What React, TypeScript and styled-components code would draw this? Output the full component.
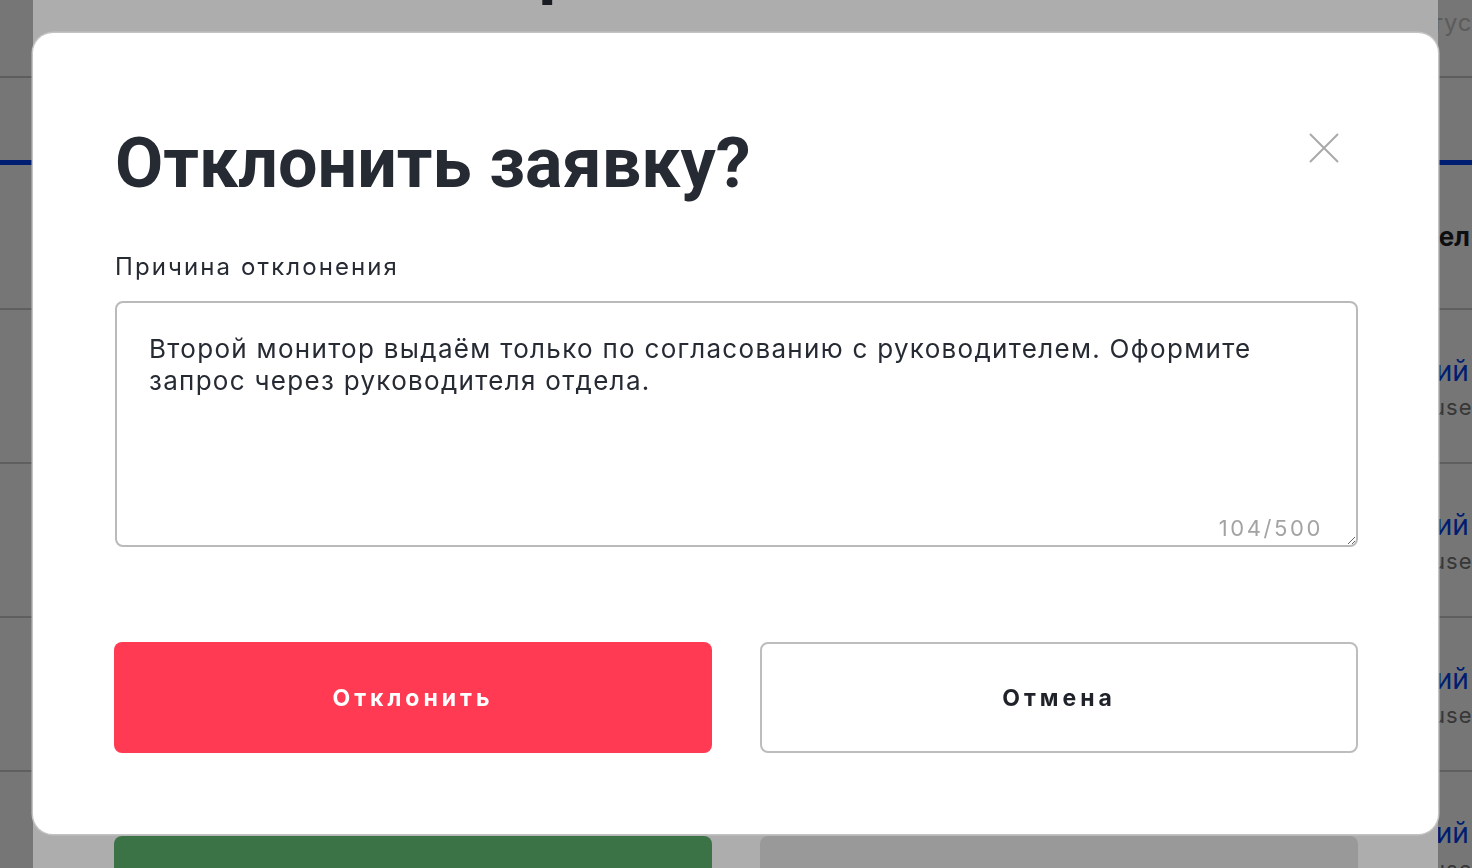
import styled, { createGlobalStyle } from 'styled-components';

const GlobalStyle = createGlobalStyle`
	html, body {
		margin: 0;
		height: 100%;
		overflow: hidden;
	}
	body {
		font-family: Inter, 'Noto Sans', sans-serif;
		color: #262a33;
	}
	* { box-sizing: border-box; }
`;

// ---- page behind both dialogs ----

const Page = styled.div`
	min-height: 100vh;
	background: #fff;
	display: flex;
	flex-direction: column;
`;

const TopBar = styled.header`
	height: 78px;
	border-bottom: 2px solid #c9c9c9;
	display: flex;
	justify-content: flex-end;
	padding-top: 8px;
`;

const Search = styled.div`
	width: 120px;
	font-size: 24px;
	letter-spacing: 0.04em;
	color: #c6c6c6;
	white-space: nowrap;
`;

const TabsBar = styled.nav`
	height: 87px;
	border-bottom: 5px solid #0041f5;
`;

const Row = styled.div<{ $head?: boolean }>`
	height: ${p => (p.$head ? 145 : 154)}px;
	border-bottom: 2px solid #cdcdcd;
	display: flex;
	align-items: ${p => (p.$head ? 'center' : 'flex-start')};
`;

const Cell = styled.div<{ $head?: boolean }>`
	margin-left: ${p => (p.$head ? 1388 : 1344)}px;
	padding-top: ${p => (p.$head ? 0 : 44)}px;
	white-space: nowrap;
	font-size: ${p => (p.$head ? 26 : 28)}px;
	font-weight: ${p => (p.$head ? 700 : 400)};
	color: ${p => (p.$head ? '#1c1f26' : '#0041f5')};
`;

const Sub = styled.div`
	font-size: 22px;
	letter-spacing: 0.05em;
	color: #777;
	margin-top: 6px;
	margin-left: 88px;
`;

// ---- dialogs ----

const Overlay = styled.div`
	position: fixed;
	inset: 0;
	background: rgba(0, 0, 0, 0.32);
`;

const BackSheet = styled.section`
	position: fixed;
	left: 33px;
	width: 1405px;
	top: -120px;
	bottom: -150px;
	background: #fff;
	border-radius: 20px;
	display: flex;
	flex-direction: column;
	padding: 47px 80px 71px;
`;

const Dialog = styled.section`
	position: fixed;
	left: 33px;
	top: 33px;
	width: 1405px;
	height: 801px;
	background: #fff;
	border-radius: 20px;
	box-shadow: 0 0 0 1.5px #c3c3c3;
	display: flex;
	flex-direction: column;
	padding: 90px 80px 81px 82px;
`;

const Header = styled.div`
	display: flex;
	justify-content: space-between;
	align-items: flex-start;
`;

const Title = styled.h2`
	margin: 0;
	font-family: Roboto, 'Liberation Sans', sans-serif;
	font-weight: 700;
	font-size: 70px;
	line-height: 80px;
	color: #262a33;
	white-space: nowrap;
`;

const CloseButton = styled.button`
	width: 66px;
	height: 50px;
	margin-right: 1px;
	border: 0;
	background: none;
	padding: 0;
	display: flex;
	justify-content: center;
	align-items: center;
	cursor: pointer;
`;

const Label = styled.label`
	display: block;
	margin-top: 48px;
	font-size: 24px;
	line-height: 32px;
	letter-spacing: 2.1px;
	color: #262a33;
`;

const Field = styled.div`
	position: relative;
	margin-top: 18px;
`;

const TextArea = styled.textarea`
	display: block;
	width: 100%;
	height: 246px;
	border: 2px solid #bababa;
	border-radius: 8px;
	padding: 30px 30px 0 32px;
	font-family: Inter, 'Noto Sans', sans-serif;
	font-size: 26px;
	line-height: 32px;
	letter-spacing: 1.3px;
	color: #262a33;
	resize: both;
	outline: none;
`;

const Counter = styled.span`
	position: absolute;
	right: 35px;
	bottom: 5px;
	font-size: 22px;
	line-height: 28px;
	letter-spacing: 2.6px;
	color: #a3a3a3;
`;

const Actions = styled.div<{ $pushDown?: boolean }>`
	display: grid;
	grid-template-columns: 1fr 1fr;
	gap: 48px;
	margin-top: ${p => (p.$pushDown ? 'auto' : '95px')};
	margin-left: ${p => (p.$pushDown ? '1px' : '-1px')};
`;

const Button = styled.button<{ $variant: 'danger' | 'outline' | 'success' | 'muted' }>`
	height: 111px;
	border-radius: 8px;
	font-family: Inter, 'Noto Sans', sans-serif;
	font-size: 23px;
	font-weight: 700;
	letter-spacing: 4px;
	cursor: pointer;
	border: 2px solid
		${p => (p.$variant === 'outline' ? '#bdbdbd' : 'transparent')};
	background: ${p =>
		p.$variant === 'danger'
			? '#ff3a52'
			: p.$variant === 'success'
				? '#57aa69'
				: p.$variant === 'muted'
					? '#e2e2e2'
					: '#fff'};
	color: ${p => (p.$variant === 'danger' || p.$variant === 'success' ? '#fff' : '#1f2229')};
`;

const CloseIcon = () => (
	<svg width='30' height='30' viewBox='0 0 30 30'>
		<path d='M1 1 L29 29 M29 1 L1 29' stroke='#a9a9a9' strokeWidth='2' fill='none' />
	</svg>
);

const rows = [
	{ name: 'Дмитрий Соколов', mail: 'user.sokolov@corp.ru' },
	{ name: 'Дмитрий Петров', mail: 'user.petrov@corp.ru' },
	{ name: 'Дмитрий Орлов', mail: 'user.orlov@corp.ru' },
	{ name: 'Дмитрий Ковалёв', mail: 'user.kovalev@corp.ru' },
];

const text =
	'Второй монитор выдаём только по согласованию с руководителем. Оформите запрос через руководителя отдела.';

export default function App() {
	return (
		<>
			<GlobalStyle />
			<Page>
				<TopBar>
					<Search>по статусу</Search>
				</TopBar>
				<TabsBar />
				<Row $head>
					<Cell $head>Отдел</Cell>
				</Row>
				{rows.map(r => (
					<Row key={r.name}>
						<Cell>
							{r.name}
							<Sub>{r.mail}</Sub>
						</Cell>
					</Row>
				))}
			</Page>

			<Overlay />
			<BackSheet>
				<Title>Заявка на перенос</Title>
				<Actions $pushDown>
					<Button $variant='success'>Одобрить</Button>
					<Button $variant='muted'>Отклонить</Button>
				</Actions>
			</BackSheet>

			<Overlay />
			<Dialog role='dialog'>
				<Header>
					<Title>Отклонить заявку?</Title>
					<CloseButton aria-label='Закрыть'>
						<CloseIcon />
					</CloseButton>
				</Header>
				<Label htmlFor='reason'>Причина отклонения</Label>
				<Field>
					<TextArea id='reason' defaultValue={text} maxLength={500} />
					<Counter>{text.length}/500</Counter>
				</Field>
				<Actions>
					<Button $variant='danger'>Отклонить</Button>
					<Button $variant='outline'>Отмена</Button>
				</Actions>
			</Dialog>
		</>
	);
}
